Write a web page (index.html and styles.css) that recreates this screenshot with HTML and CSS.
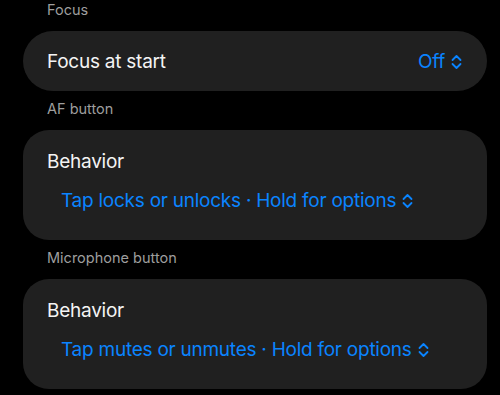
FILE: index.html
```html
<!DOCTYPE html>
<html lang="en">
<head>
<meta charset="utf-8">
<link rel="stylesheet" href="styles.css">
</head>
<body>
<div class="page">
  <div class="label label-first">Focus</div>
  <div class="card card-row">
    <span class="title">Focus at start</span>
    <span class="value">Off
      <svg class="chev" viewBox="0 0 11 16" width="11" height="16"><path d="M1.5 6 L5.5 2 L9.5 6 M1.5 10 L5.5 14 L9.5 10" fill="none" stroke="currentColor" stroke-width="1.8" stroke-linecap="round" stroke-linejoin="round"/></svg>
    </span>
  </div>
  <div class="label">AF button</div>
  <div class="card card-stack">
    <div class="title">Behavior</div>
    <div class="value sub">Tap locks or unlocks · Hold for options
      <svg class="chev" viewBox="0 0 11 16" width="11" height="16"><path d="M1.5 6 L5.5 2 L9.5 6 M1.5 10 L5.5 14 L9.5 10" fill="none" stroke="currentColor" stroke-width="1.8" stroke-linecap="round" stroke-linejoin="round"/></svg>
    </div>
  </div>
  <div class="label">Microphone button</div>
  <div class="card card-stack">
    <div class="title">Behavior</div>
    <div class="value sub">Tap mutes or unmutes · Hold for options
      <svg class="chev" viewBox="0 0 11 16" width="11" height="16"><path d="M1.5 6 L5.5 2 L9.5 6 M1.5 10 L5.5 14 L9.5 10" fill="none" stroke="currentColor" stroke-width="1.8" stroke-linecap="round" stroke-linejoin="round"/></svg>
    </div>
  </div>
</div>
</body>
</html>
```
FILE: styles.css
```css
html, body {
  margin: 0;
  padding: 0;
  background: #000;
}
body {
  font-family: Inter, "Noto Sans", sans-serif;
  color: #f2f2f2;
  width: 500px;
  height: 395px;
  overflow: hidden;
}
.page {
  padding: 1px 13px 0 23px;
  display: flex;
  flex-direction: column;
}
.label {
  font-size: 14.5px;
  line-height: 17px;
  color: #9e9e9e;
  padding-left: 24px;
  margin-top: 9px;
  margin-bottom: 13px;
}
.label-first {
  margin-top: 0;
  margin-bottom: 13px;
}
.card {
  background: #202020;
  border-radius: 30px;
  font-size: 19px;
  line-height: 24px;
  letter-spacing: -0.25px;
}
.card-row {
  box-sizing: border-box;
  height: 60px;
  display: flex;
  align-items: center;
  justify-content: space-between;
  padding: 2px 25px 0 24px;
}
.card-stack {
  border-radius: 26px;
  padding: 20px 24px 27px 24px;
  display: flex;
  flex-direction: column;
  gap: 15px;
}
.title {
  color: #f4f4f4;
}
.value {
  color: #0a84ff;
  display: flex;
  align-items: center;
  gap: 6px;
}
.sub {
  padding-left: 14px;
}
.chev {
  display: block;
  flex: none;
}
```
